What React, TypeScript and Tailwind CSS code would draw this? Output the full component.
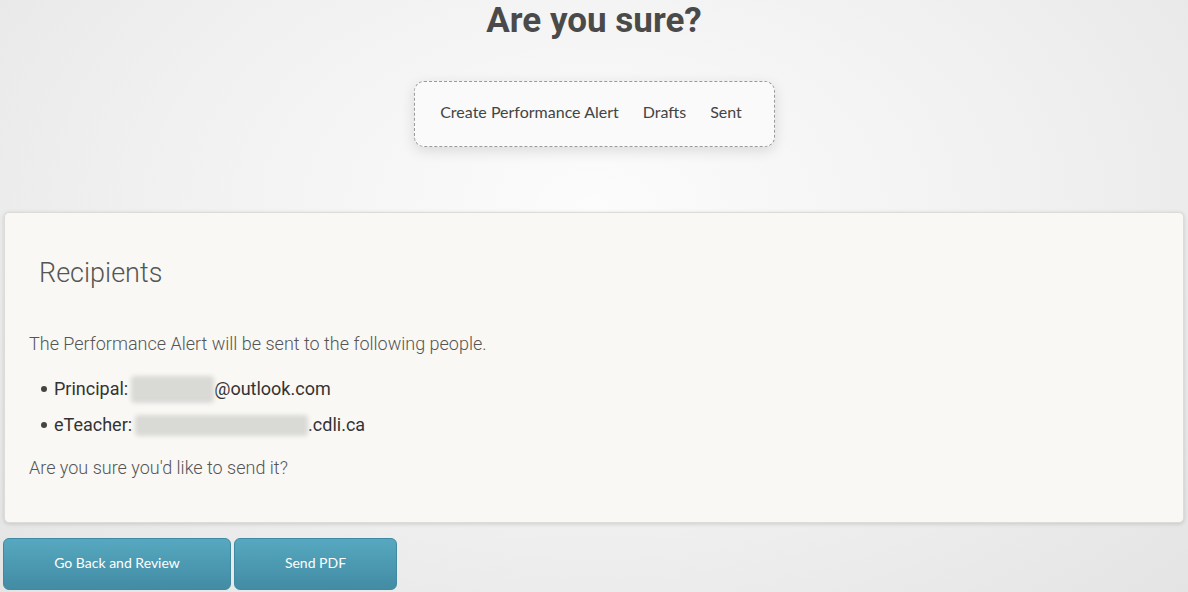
import { ReactNode } from 'react';

function NavLink({ children }: { children: ReactNode }) {
    return <span className="px-[12px] text-[16px] text-[#444] cursor-pointer">{children}</span>;
}

function Blur({ w, h }: { w: number; h: number }) {
    // redacted address, drawn as a soft grey block
    return (
        <span
            className="inline-block align-middle bg-[#d9d9d6] blur-[2px] rounded-sm"
            style={{ width: w, height: h }}
        />
    );
}

export default function App() {
    return (
        <div
            className="w-[1188px] h-[592px] overflow-hidden bg-[radial-gradient(ellipse_at_50%_35%,#fcfcfc_0%,#f0f0f0_55%,#e4e4e4_100%)] font-['Roboto',sans-serif]"
        >
            <h1 className="pt-[1px] text-center text-[35px] font-bold leading-[40px] text-[#4a4a4a]">
                Are you sure?
            </h1>

            <div className="flex justify-center mt-[40px]">
                <div className="w-[361px] h-[66px] flex items-center justify-center pb-[4px] pr-[6px] rounded-[10px] border border-dashed border-[#9a9a9a] bg-[#fafafa] shadow-[0_4px_14px_rgba(0,0,0,0.12)] font-['Lato',sans-serif]">
                    <NavLink>Create Performance Alert</NavLink>
                    <NavLink>Drafts</NavLink>
                    <NavLink>Sent</NavLink>
                </div>
            </div>

            <div className="mx-[4px] mt-[65px] w-[1180px] h-[311px] rounded-[5px] border border-[#dcdcd8] bg-[#f9f8f4] shadow-[0_1px_4px_rgba(0,0,0,0.15)] px-[24px]">
                <h2 className="pt-[44px] pl-[10px] text-[27px] font-light leading-[32px] text-[#555]">Recipients</h2>
                <p className="mt-[42px] text-[18px] font-light leading-[26px] text-[#555]">
                    The Performance Alert will be sent to the following people.
                </p>
                <ul className="mt-[14px] pl-[25px] text-[18px] leading-[26px] text-[#333]">
                    <li className="h-[36px] flex items-center relative">
                        <span className="absolute -left-[13px] top-[15px] w-[6px] h-[6px] rounded-full bg-[#444]" />
                        Principal:<span className="w-[3px]" /><Blur w={83} h={27} />@outlook.com
                    </li>
                    <li className="h-[36px] flex items-center relative">
                        <span className="absolute -left-[13px] top-[15px] w-[6px] h-[6px] rounded-full bg-[#444]" />
                        eTeacher:<span className="w-[3px]" /><Blur w={173} h={21} />.cdli.ca
                    </li>
                </ul>
                <p className="mt-[12px] text-[18px] font-light leading-[26px] text-[#555]">
                    Are you sure you'd like to send it?
                </p>
            </div>

            <div className="flex gap-[3px] mt-[15px] pl-[3px] font-['Lato',sans-serif]">
                <button className="w-[228px] h-[52px] pb-[4px] rounded-[6px] border border-[#3f8aa2] bg-gradient-to-b from-[#56a8c0] to-[#428ca4] text-[14px] text-white">
                    Go Back and Review
                </button>
                <button className="w-[163px] h-[52px] pb-[4px] rounded-[6px] border border-[#3f8aa2] bg-gradient-to-b from-[#56a8c0] to-[#428ca4] text-[14px] text-white">
                    Send PDF
                </button>
            </div>
        </div>
    );
}
